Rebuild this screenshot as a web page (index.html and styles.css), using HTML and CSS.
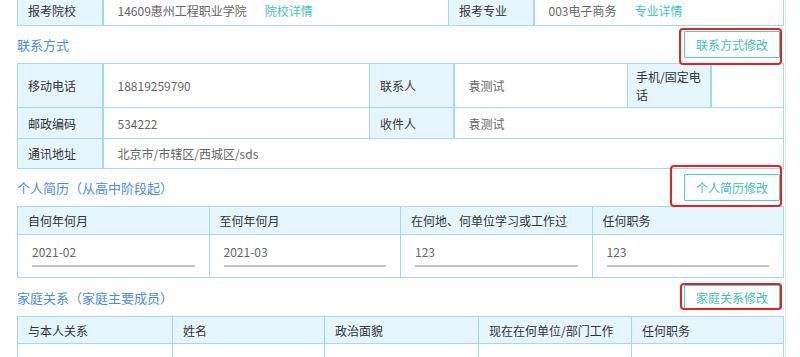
FILE: index.html
```html
<!DOCTYPE html>
<html lang="zh">
<head>
<meta charset="utf-8">
<link rel="stylesheet" href="styles.css">
</head>
<body>
<div class="page">
  <table class="grid top">
    <colgroup><col style="width:85px"><col style="width:346px"><col style="width:85px"><col></colgroup>
    <tr>
      <td class="lbl">报考院校</td>
      <td class="val">14609惠州工程职业学院<a class="link">院校详情</a></td>
      <td class="lbl">报考专业</td>
      <td class="val">003电子商务<a class="link">专业详情</a></td>
    </tr>
  </table>

  <div class="sec-head">
    <span class="sec-title">联系方式</span>
    <span class="btn-wrap"><button class="btn">联系方式修改</button><span class="mark mark-a"></span></span>
  </div>

  <table class="grid contact">
    <colgroup><col style="width:85px"><col style="width:267px"><col style="width:84px"><col style="width:174px"><col style="width:83px"><col></colgroup>
    <tr class="r1">
      <td class="lbl">移动电话</td>
      <td class="val">18819259790</td>
      <td class="lbl">联系人</td>
      <td class="val">袁测试</td>
      <td class="lbl lbl-wrap">手机/固定电话</td>
      <td class="val"></td>
    </tr>
    <tr class="r2">
      <td class="lbl">邮政编码</td>
      <td class="val">534222</td>
      <td class="lbl">收件人</td>
      <td class="val" colspan="3">袁测试</td>
    </tr>
    <tr class="r3">
      <td class="lbl">通讯地址</td>
      <td class="val" colspan="5">北京市/市辖区/西城区/sds</td>
    </tr>
  </table>

  <div class="sec-head">
    <span class="sec-title">个人简历（从高中阶段起）</span>
    <span class="btn-wrap"><button class="btn">个人简历修改</button><span class="mark mark-b"></span></span>
  </div>

  <table class="grid resume">
    <tr class="hd">
      <th>自何年何月</th>
      <th>至何年何月</th>
      <th>在何地、何单位学习或工作过</th>
      <th>任何职务</th>
    </tr>
    <tr class="bd">
      <td><input class="field" value="2021-02" readonly></td>
      <td><input class="field" value="2021-03" readonly></td>
      <td><input class="field" value="123" readonly></td>
      <td><input class="field" value="123" readonly></td>
    </tr>
  </table>

  <div class="sec-head sec-head-last">
    <span class="sec-title">家庭关系（家庭主要成员）</span>
    <span class="btn-wrap"><button class="btn btn-sm">家庭关系修改</button><span class="mark mark-c"></span></span>
  </div>

  <table class="grid family">
    <colgroup><col style="width:155px"><col style="width:152px"><col style="width:154px"><col style="width:153px"><col></colgroup>
    <tr class="hd">
      <th>与本人关系</th>
      <th>姓名</th>
      <th>政治面貌</th>
      <th>现在在何单位/部门工作</th>
      <th>任何职务</th>
    </tr>
    <tr class="bd-empty">
      <td></td><td></td><td></td><td></td><td></td>
    </tr>
  </table>
</div>
</body>
</html>
```

FILE: styles.css
```css
* { box-sizing: border-box; }

html, body {
  margin: 0;
  padding: 0;
  background: #ffffff;
  font-family: "Noto Sans CJK SC", "Noto Sans", sans-serif;
  font-size: 12px;
  color: #333333;
  overflow: hidden;
}

.page {
  margin-left: 17px;
  width: 769px;
  border-right: 1px solid #e6e6e6;
  padding-right: 1px;
}

.grid {
  width: 767px;
  border-collapse: collapse;
  table-layout: fixed;
}

.grid td,
.grid th {
  border: 1px solid #a3d8f6;
  padding: 0;
  font-weight: normal;
  text-align: left;
  vertical-align: middle;
  white-space: nowrap;
  overflow: hidden;
}

.lbl {
  background: #e6f6fe;
  color: #333333;
  padding-left: 10px !important;
  border-right-width: 2px !important;
}

.val {
  color: #666666;
  padding-left: 14px !important;
}

.link {
  color: #3ec5c0;
  margin-left: 18px;
  cursor: pointer;
}

.top {
  margin-top: -5px;
}

.top td {
  height: 30px;
}

.contact .r1 td { height: 44px; }
.contact .r2 td { height: 31px; }
.contact .r3 td { height: 30px; }

.lbl-wrap {
  white-space: normal !important;
  line-height: 18px;
  padding-left: 8px !important;
  padding-right: 4px !important;
}

.sec-head {
  height: 37px;
  display: flex;
  align-items: center;
  justify-content: space-between;
  padding-right: 4px;
}

.sec-head-last {
  height: 38px;
  padding-top: 1px;
}

.sec-title {
  font-size: 13px;
  color: #4a8cf0;
}

.btn-wrap {
  position: relative;
  display: inline-block;
}

.btn {
  display: block;
  width: 96px;
  height: 27px;
  border: 1px solid #4dcfca;
  background: #ffffff;
  color: #3cbfbc;
  font-family: "Noto Sans CJK SC", "Noto Sans", sans-serif;
  font-size: 12px;
  padding: 0;
  border-radius: 1px;
}

.btn-sm {
  height: 25px;
}

.mark {
  position: absolute;
  border: 2px solid #e52222;
  border-radius: 4px;
  pointer-events: none;
}

.mark-a { left: -5px; top: -3px; right: -2px; bottom: -7px; }
.mark-b { left: -14px; top: -9px; right: -2px; bottom: -6px; }
.mark-c { left: -4px; top: -2px; right: -2px; bottom: 0px; }

.resume th,
.family th {
  background: #e6f6fe;
  color: #333333;
  padding-left: 10px;
}

.resume .hd th { height: 28px; }
.resume .bd td {
  height: 43px;
  vertical-align: top;
  padding: 2px 14px 0 14px;
}

.field {
  display: block;
  width: 100%;
  height: 30px;
  border: none;
  border-bottom: 2px solid #c4c4c4;
  padding: 0;
  margin: 0;
  font-family: "Noto Sans CJK SC", "Noto Sans", sans-serif;
  font-size: 12px;
  color: #666666;
  background: transparent;
  outline: none;
}

.family .hd th { height: 27px; }
.family .bd-empty td { height: 15px; }
```
